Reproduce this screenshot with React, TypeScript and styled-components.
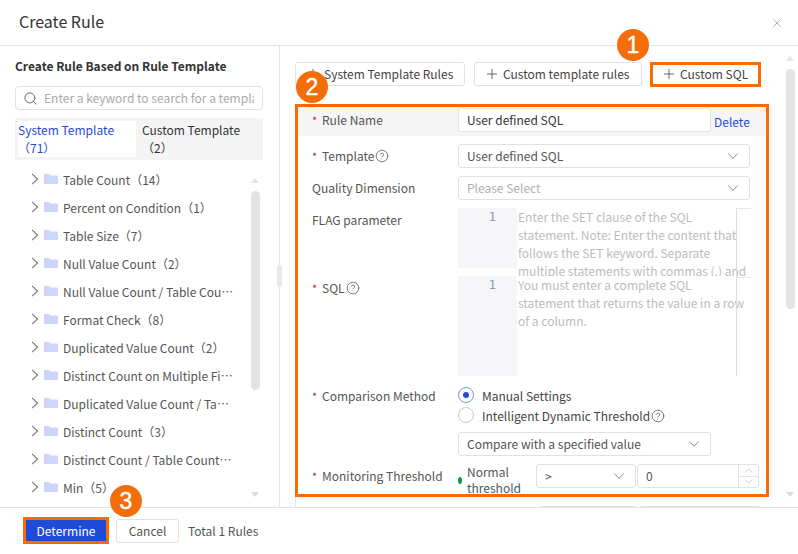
import styled, { createGlobalStyle } from "styled-components";
import { ChevronDown, ChevronUp, CircleHelp, Plus, Search, X } from "lucide-react";

const TREE = [
  "Table Count（14）",
  "Percent on Condition（1）",
  "Table Size（7）",
  "Null Value Count（2）",
  "Null Value Count / Table Count（3）",
  "Format Check（8）",
  "Duplicated Value Count（2）",
  "Distinct Count on Multiple Fields（2）",
  "Duplicated Value Count / Table Count（3）",
  "Distinct Count（3）",
  "Distinct Count / Table Count（3）",
  "Min（5）",
];

const Arrow = () => (
  <svg width="8" height="12" viewBox="0 0 8 12" fill="none" stroke="#777" strokeWidth="1.1">
    <path d="M1 .8 6.6 6 1 11.2" />
  </svg>
);

const Folder = () => (
  <svg width="14" height="10" viewBox="0 0 14 10">
    <path d="M0 1a1 1 0 0 1 1-1h4l1.5 1.5H13a1 1 0 0 1 1 1V9a1 1 0 0 1-1 1H1a1 1 0 0 1-1-1z" fill="#ccd6fb" />
  </svg>
);

const Help = () => (
  <HelpIcon>
    <CircleHelp size={14} strokeWidth={1.3} />
  </HelpIcon>
);

const Caret = () => <ChevronDown size={18} strokeWidth={1.2} color="#777" />;

const App = () => {
  return (
    <Dialog>
      <GlobalStyle />
      <Header>
        <h1>Create Rule</h1>
        <Close>
          <X size={14} strokeWidth={1.3} />
        </Close>
      </Header>
      <Body>
        <LeftPanel>
          <LeftTitle>Create Rule Based on Rule Template</LeftTitle>
          <SearchBox>
            <Search size={15} strokeWidth={1.4} color="#555" />
            <span>Enter a keyword to search for a template</span>
          </SearchBox>
          <Tabs>
            <Tab $active>
              System Template
              <br />
              <i>（71）</i>
            </Tab>
            <Tab>
              Custom Template
              <br />
              <i>（2）</i>
            </Tab>
          </Tabs>
          <TreeWrap>
            {TREE.map((t) => (
              <TreeRow key={t}>
                <Arrow />
                <Folder />
                <span>{t}</span>
              </TreeRow>
            ))}
            <ScrollBar $top={13} $thumbTop={13} $thumbHeight={199} $bottom={10}>
              <ScrollUp />
            </ScrollBar>
          </TreeWrap>
        </LeftPanel>
        <RightPanel>
          <Handle />
          <Toolbar>
            <ToolButton $width={170}>
              <Plus size={16} strokeWidth={1.2} />
              System Template Rules
            </ToolButton>
            <ToolButton $width={168}>
              <Plus size={16} strokeWidth={1.2} />
              Custom template rules
            </ToolButton>
            <ToolButton $width={110}>
              <Plus size={16} strokeWidth={1.2} />
              Custom SQL
            </ToolButton>
          </Toolbar>
          <Form>
            <NameRow>
              <Label $required>Rule Name</Label>
              <NameInput>User defined SQL</NameInput>
              <DeleteLink>Delete</DeleteLink>
            </NameRow>
            <Row>
              <Label $required>
                Template
                <Help />
              </Label>
              <Select $width={292}>
                User defined SQL
                <Caret />
              </Select>
            </Row>
            <Row>
              <Label>Quality Dimension</Label>
              <Select $width={292} $placeholder>
                Please Select
                <Caret />
              </Select>
            </Row>
            <Row>
              <Label>FLAG parameter</Label>
              <Editor $height={60} $lineHeight={68} $frame>
                <Gutter>1</Gutter>
                <EditorText>
                  Enter the SET clause of the SQL statement. Note: Enter the content that follows the SET keyword.
                  Separate multiple statements with commas (,) and
                </EditorText>
              </Editor>
            </Row>
            <Row>
              <Label $required>
                SQL
                <Help />
              </Label>
              <Editor $height={100} $lineHeight={100}>
                <Gutter>1</Gutter>
                <EditorText>
                  You must enter a complete SQL statement that returns the value in a row of a column.
                </EditorText>
              </Editor>
            </Row>
            <Row>
              <Label $required>Comparison Method</Label>
              <MethodBody>
                <Radio $checked>
                  <b />
                  Manual Settings
                </Radio>
                <Radio>
                  <b />
                  Intelligent Dynamic Threshold
                  <Help />
                </Radio>
                <Select $width={253}>
                  Compare with a specified value
                  <Caret />
                </Select>
              </MethodBody>
            </Row>
            <ThresholdRow>
              <Label $required>Monitoring Threshold</Label>
              <Dot />
              <ThresholdName>Normal threshold</ThresholdName>
              <Select $width={100}>
                &gt;
                <Caret />
              </Select>
              <NumberInput>
                0
                <Steppers>
                  <span>
                    <ChevronUp size={13} strokeWidth={1.1} />
                  </span>
                  <span>
                    <ChevronDown size={13} strokeWidth={1.1} />
                  </span>
                </Steppers>
              </NumberInput>
            </ThresholdRow>
            <GhostRow>
              <Select $width={100} />
              <Select $width={122} />
            </GhostRow>
          </Form>
          <ScrollBar $top={10} $thumbTop={13} $thumbHeight={240} $bottom={10}>
            <ScrollUp />
          </ScrollBar>
        </RightPanel>
      </Body>
      <Footer>
        <Primary>Determine</Primary>
        <Cancel>Cancel</Cancel>
        <Total>Total 1 Rules</Total>
      </Footer>

      <Outline $x={650} $y={62} $w={111} $h={25} />
      <Outline $x={295} $y={104} $w={474} $h={393} />
      <Outline $x={23} $y={517} $w={86} $h={27} />
      <Badge $x={617} $y={29}>1</Badge>
      <Badge $x={296} $y={71}>2</Badge>
      <Badge $x={110} $y={485}>3</Badge>
    </Dialog>
  );
};

export default App;

const GlobalStyle = createGlobalStyle`
  html, body {
    margin: 0;
    padding: 0;
    background: #fff;
  }
  * {
    box-sizing: border-box;
  }
`;

const Dialog = styled.div`
  position: relative;
  width: 798px;
  height: 554px;
  overflow: hidden;
  display: flex;
  flex-direction: column;
  background: #fff;
  color: #333;
  font-family: "Noto Sans CJK SC", "Noto Sans", sans-serif;
  font-size: 12px;
`;

const Header = styled.div`
  height: 46px;
  flex: none;
  display: flex;
  align-items: center;
  justify-content: space-between;
  padding: 0 14px 4px 19px;
  border-bottom: 1px solid #e3e4e6;

  h1 {
    margin: 0;
    font-size: 16px;
    line-height: 24px;
    font-weight: 400;
    color: #333;
  }
`;

const Close = styled.div`
  display: flex;
  color: #999;
  margin-top: 4px;
`;

const Body = styled.div`
  flex: 1;
  min-height: 0;
  display: flex;
`;

const LeftPanel = styled.div`
  width: 280px;
  flex: none;
  border-right: 1px solid #e3e4e6;
  padding: 0 16px 0 15px;
  display: flex;
  flex-direction: column;
`;

const LeftTitle = styled.div`
  margin-top: 10px;
  line-height: 20px;
  font-weight: 700;
  color: #333;
`;

const SearchBox = styled.div`
  margin-top: 10px;
  height: 24px;
  flex: none;
  border: 1px solid #dfe1e6;
  border-radius: 4px;
  display: flex;
  align-items: center;
  gap: 6px;
  padding: 0 8px 0 7px;
  overflow: hidden;

  span {
    color: #aaa;
    white-space: nowrap;
    overflow: hidden;
    padding-bottom: 2px;
  }
  svg {
    flex: none;
  }
`;

const Tabs = styled.div`
  margin-top: 8px;
  height: 42px;
  flex: none;
  background: #f4f4f5;
  display: flex;
  padding: 3px 0 3px 3px;
`;

const Tab = styled.div<{ $active?: boolean }>`
  width: 118px;
  flex: none;
  margin-right: 6px;
  background: ${(p) => (p.$active ? "#fff" : "transparent")};
  color: ${(p) => (p.$active ? "#1f4bd8" : "#333")};
  line-height: 18px;
  white-space: nowrap;

  i {
    font-style: normal;
  }
`;

const TreeWrap = styled.div`
  position: relative;
  flex: 1;
  min-height: 0;
  margin-top: 5px;
`;

const TreeRow = styled.div`
  height: 28px;
  display: flex;
  align-items: center;
  padding-left: 16px;
  color: #555;

  svg {
    flex: none;
  }
  svg:nth-child(2) {
    margin: 0 5px;
  }
  span {
    width: 171px;
    white-space: nowrap;
    overflow: hidden;
    text-overflow: ellipsis;
  }
`;

const ScrollBar = styled.div<{ $top: number; $thumbTop: number; $thumbHeight: number; $bottom: number }>`
  position: absolute;
  top: ${(p) => p.$top}px;
  bottom: ${(p) => p.$bottom}px;
  right: 3px;
  width: 9px;

  &::before {
    content: "";
    position: absolute;
    top: ${(p) => p.$thumbTop}px;
    left: 0;
    width: 9px;
    height: ${(p) => p.$thumbHeight}px;
    border-radius: 5px;
    background: #e4e4e6;
  }
  &::after {
    content: "";
    position: absolute;
    bottom: 0;
    left: 0;
    border-left: 4.5px solid transparent;
    border-right: 4.5px solid transparent;
    border-top: 5px solid #dcdcdf;
  }
`;

const ScrollUp = styled.div`
  position: absolute;
  top: 0;
  left: 0;
  border-left: 4.5px solid transparent;
  border-right: 4.5px solid transparent;
  border-bottom: 5px solid #e4e4e6;
`;

const RightPanel = styled.div`
  position: relative;
  flex: 1;
  min-width: 0;
  padding: 16px 0 0 15px;
`;

const Handle = styled.div`
  position: absolute;
  left: -3px;
  top: 219px;
  width: 5px;
  height: 22px;
  border-radius: 2px;
  background: #e9e9eb;
`;

const Toolbar = styled.div`
  display: flex;
  gap: 9px;
`;

const ToolButton = styled.div<{ $width: number }>`
  width: ${(p) => p.$width}px;
  height: 24px;
  border: 1px solid #dfe1e6;
  border-radius: 3px;
  display: flex;
  align-items: center;
  gap: 3px;
  padding: 0 0 2px 9px;
  color: #444;

  svg {
    margin-top: 2px;
  }
`;

const Form = styled.div`
  margin-top: 20px;
  width: 472px;
  padding-left: 2px;
  border-left: 1px solid #e3e4e6;
`;

const NameRow = styled.div`
  height: 30px;
  display: flex;
  align-items: flex-start;
  background: #f5f5f6;
  padding: 2px 0 0 14px;
  border-radius: 3px;
`;

const Row = styled.div`
  display: flex;
  align-items: flex-start;
  margin-top: 8px;
  padding-left: 14px;
`;

const Label = styled.div<{ $required?: boolean }>`
  width: 146px;
  flex: none;
  line-height: 24px;
  height: 24px;
  color: #555;
  display: flex;
  align-items: center;
  white-space: nowrap;
  padding-bottom: 1px;

  &::before {
    content: ${(p) => (p.$required ? '"*"' : "none")};
    color: #d9142a;
    width: 10px;
    font-size: 11px;
  }
`;

const HelpIcon = styled.span`
  display: inline-flex;
  margin-left: 1px;
  margin-top: 1px;
  color: #555;
`;

const NameInput = styled.div`
  width: 253px;
  height: 24px;
  background: #fff;
  border: 1px solid #e3e4e6;
  border-radius: 3px;
  padding: 0 8px;
  line-height: 22px;
  color: #333;
`;

const DeleteLink = styled.div`
  margin: 2px 0 0 3px;
  line-height: 24px;
  color: #1f4bd8;
`;

const Select = styled.div<{ $width: number; $placeholder?: boolean }>`
  width: ${(p) => p.$width}px;
  height: 24px;
  flex: none;
  border: 1px solid #dfe1e6;
  border-radius: 3px;
  display: flex;
  align-items: center;
  justify-content: space-between;
  padding: 0 7px 1px 8px;
  color: ${(p) => (p.$placeholder ? "#b0b0b0" : "#555")};
`;

const Editor = styled.div<{ $height: number; $lineHeight: number; $frame?: boolean }>`
  position: relative;
  width: 292px;
  height: ${(p) => p.$height}px;
  display: flex;

  &::after {
    content: "";
    position: absolute;
    left: 278px;
    top: 0;
    width: 14px;
    height: ${(p) => p.$lineHeight}px;
    border-left: 1px solid #dcdde0;
    border-top: ${(p) => (p.$frame ? "1px solid #e6e6e8" : "none")};
    border-bottom: ${(p) => (p.$frame ? "1px solid #e6e6e8" : "none")};
  }
`;

const Gutter = styled.div`
  width: 59px;
  flex: none;
  background: #f6f6f8;
  text-align: right;
  padding-right: 21px;
  font-family: "DejaVu Sans Mono", monospace;
  font-size: 12px;
  line-height: 18px;
  color: #8c96b4;
`;

const EditorText = styled.div`
  width: 232px;
  flex: none;
  height: 68px;
  padding-left: 1px;
  line-height: 18px;
  color: #bcbcbc;
  overflow: hidden;
`;

const MethodBody = styled.div`
  display: flex;
  flex-direction: column;
  gap: 2px;
  padding-top: 2px;

  ${Select} {
    margin-top: 6px;
  }
`;

const Radio = styled.div<{ $checked?: boolean }>`
  height: 18px;
  display: flex;
  align-items: center;
  color: #444;

  b {
    width: 16px;
    height: 16px;
    margin-right: 8px;
    border-radius: 50%;
    border: 1px solid ${(p) => (p.$checked ? "#7b93ea" : "#c9cacf")};
    display: flex;
    align-items: center;
    justify-content: center;
  }
  b::after {
    content: "";
    width: 6px;
    height: 6px;
    border-radius: 50%;
    background: ${(p) => (p.$checked ? "#1f4bd8" : "transparent")};
  }
`;

const ThresholdRow = styled.div`
  display: flex;
  align-items: center;
  height: 24px;
  margin-top: 8px;
  padding-left: 14px;
`;

const Dot = styled.div`
  width: 4px;
  height: 7px;
  border-radius: 50%;
  background: #0a9a47;
  flex: none;
  margin: 8px 5px 0 0;
`;

const ThresholdName = styled.div`
  width: 69px;
  flex: none;
  line-height: 16px;
  color: #555;
  margin-top: 7px;
`;

const NumberInput = styled.div`
  position: relative;
  width: 122px;
  height: 24px;
  flex: none;
  margin-left: 1px;
  border: 1px solid #dfe1e6;
  border-radius: 3px;
  padding: 0 8px;
  line-height: 22px;
  color: #555;
`;

const Steppers = styled.div`
  position: absolute;
  top: 0;
  right: 0;
  bottom: 0;
  width: 20px;
  border-left: 1px solid #e3e4e6;
  display: flex;
  flex-direction: column;
  color: #aaa;

  span {
    flex: 1;
    min-height: 0;
    display: flex;
    align-items: center;
    justify-content: center;
  }
  svg {
    flex: none;
  }
  span + span {
    border-top: 1px solid #e3e4e6;
  }
`;

const GhostRow = styled.div`
  display: flex;
  gap: 1px;
  margin: 18px 0 0 240px;
`;

const Footer = styled.div`
  position: relative;
  z-index: 1;
  height: 47px;
  flex: none;
  background: #fff;
  border-top: 1px solid #e3e4e6;
  display: flex;
  align-items: center;
  gap: 9px;
  padding: 0 0 0 25px;
`;

const Primary = styled.div`
  width: 82px;
  height: 24px;
  background: #1f4bd8;
  color: #fff;
  display: flex;
  align-items: center;
  justify-content: center;
  padding-bottom: 1px;
`;

const Cancel = styled.div`
  width: 63px;
  height: 24px;
  border: 1px solid #dfe1e6;
  border-radius: 3px;
  display: flex;
  align-items: center;
  justify-content: center;
  padding-bottom: 1px;
  color: #555;
`;

const Total = styled.div`
  color: #555;
  padding-bottom: 1px;
`;

const Outline = styled.div<{ $x: number; $y: number; $w: number; $h: number }>`
  position: absolute;
  z-index: 2;
  left: ${(p) => p.$x}px;
  top: ${(p) => p.$y}px;
  width: ${(p) => p.$w}px;
  height: ${(p) => p.$h}px;
  border: 3px solid #ff6a00;
`;

const Badge = styled.div<{ $x: number; $y: number }>`
  position: absolute;
  z-index: 3;
  left: ${(p) => p.$x}px;
  top: ${(p) => p.$y}px;
  width: 32px;
  height: 32px;
  border-radius: 50%;
  background: #f46d0b;
  color: #fff;
  font-family: "Liberation Sans", sans-serif;
  font-size: 23px;
  line-height: 32px;
  text-align: center;
  -webkit-text-stroke: 0.4px #fff;
`;
